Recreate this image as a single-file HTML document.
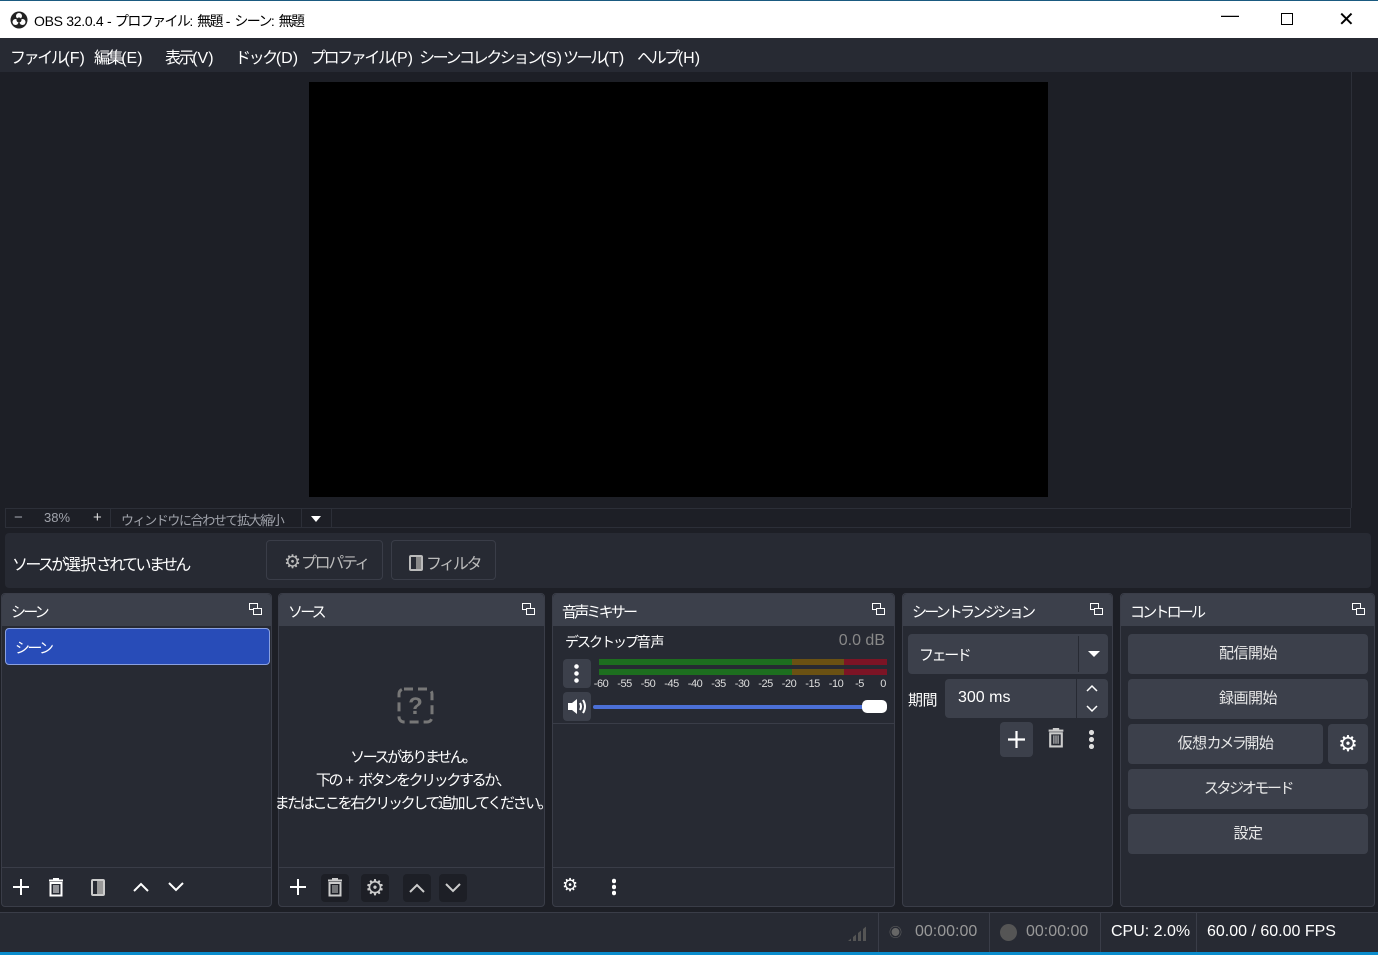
<!DOCTYPE html>
<html><head><meta charset="utf-8"><style>
*{box-sizing:border-box;margin:0;padding:0}
body{width:1378px;height:955px;overflow:hidden;background:#1d1f26;font-family:"Liberation Sans","Noto Sans CJK JP",sans-serif;color:#fff;position:relative;font-size:15px}
.a{position:absolute}
.j{letter-spacing:-2.6px}
i{font-style:normal;letter-spacing:0}
.title{left:0;top:0;width:1378px;height:38px;background:#fff;color:#000;border-top:1px solid #1a5a80}
.menu{left:0;top:38px;width:1378px;height:34px;background:#272a33;font-size:16px}
.menu span{position:absolute;top:6px;letter-spacing:-2.4px;white-space:nowrap}
.dock{background:#272a33;border:1px solid #3a3d48;border-radius:4px}
.hd{position:absolute;left:0;top:0;right:0;height:32px;background:#3c404b;font-size:15px;padding:7px 9px;border-radius:4px 4px 0 0;letter-spacing:-2.8px;white-space:nowrap}
.fl{position:absolute;right:9px;top:9px;width:13px;height:12px}
.btn{position:absolute;background:#3c404b;border-radius:4px;text-align:center;font-size:15px;color:#e8e8e8;letter-spacing:-2.4px}
.k{letter-spacing:-0.5px}
.tb{position:absolute;bottom:0;left:0;right:0;height:39px;border-top:1px solid #3a3d48}
.tk{position:absolute;top:52px;width:24px;text-align:center;font-size:11px;color:#ddd;letter-spacing:-0.5px}
</style></head><body>
<div class="a title">
<svg class="a" style="left:10px;top:10px" width="18" height="18" viewBox="0 0 18 18"><circle cx="9" cy="9" r="8.5" fill="#222"/><circle cx="9" cy="5" r="3" fill="#fff"/><circle cx="5.5" cy="11" r="3" fill="#fff"/><circle cx="12.5" cy="11" r="3" fill="#fff"/><circle cx="9" cy="9" r="2.5" fill="#222"/></svg>
<span class="a" style="left:34px;top:10px;font-size:14px;letter-spacing:-1.6px;white-space:nowrap"><i style="letter-spacing:-0.3px">OBS 32.0.4 - </i>プロファイル<i>: </i>無題<i> - </i>シーン<i>: </i>無題</span>
<span class="a" style="left:1221px;top:4px;font-size:18px">—</span>
<div class="a" style="left:1281px;top:12px;width:12px;height:12px;border:1px solid #000"></div>
<span class="a" style="left:1338px;top:6px;font-size:20px;font-weight:100">✕</span>
</div>
<div class="a menu">
<span style="left:10px">ファイル<i>(F)</i></span><span style="left:94px">編集<i>(E)</i></span><span style="left:165px">表示<i>(V)</i></span><span style="left:235px">ドック<i>(D)</i></span><span style="left:310px">プロファイル<i>(P)</i></span><span style="left:419px">シーンコレクション<i>(S)</i></span><span style="left:563px">ツール<i>(T)</i></span><span style="left:637px">ヘルプ<i>(H)</i></span>
</div>
<div class="a" style="left:309px;top:82px;width:739px;height:415px;background:#000"></div>
<div class="a" style="left:1351px;top:72px;width:19px;height:436px;border-left:1px solid #2c2f38"></div>
<div class="a" style="left:5px;top:508px;width:1346px;height:20px;border:1px solid #2c2f38;font-size:13px;color:#a0a3ab">
<span class="a" style="left:8px;top:0;font-size:15px;line-height:17px">−</span><span class="a" style="left:38px;top:1px">38%</span><span class="a" style="left:87px;top:0;color:#ddd;font-size:15px;line-height:17px">+</span>
<div class="a" style="left:104px;top:0;width:1px;height:18px;background:#2c2f38"></div>
<span class="a" style="left:115px;top:1px;letter-spacing:-1.4px;white-space:nowrap">ウィンドウに合わせて拡大縮小</span>
<div class="a" style="left:295px;top:0;width:1px;height:18px;background:#2c2f38"></div>
<div class="a" style="left:305px;top:7px;border:5px solid transparent;border-top:6px solid #fff;border-bottom:0"></div>
<div class="a" style="left:325px;top:0;width:1px;height:18px;background:#2c2f38"></div>
</div>
<div class="a" style="left:5px;top:533px;width:1366px;height:55px;background:#272a33;border-radius:4px">
<span class="a j" style="left:7px;top:18px;font-size:16px;white-space:nowrap">ソースが<span class="k">選択</span>されていません</span>
<div class="a" style="left:261px;top:7px;width:117px;height:40px;border:1px solid #3a3d48;border-radius:4px;color:#bbb;font-size:16px;padding:8px 0 0 17px;letter-spacing:-2.4px;white-space:nowrap"><span style="font-size:19px;letter-spacing:0">⚙</span>プロパティ</div>
<div class="a" style="left:386px;top:7px;width:105px;height:40px;border:1px solid #3a3d48;border-radius:4px;color:#bbb;font-size:16px;padding:9px 0 0 17px;letter-spacing:-2.4px;white-space:nowrap"><span style="display:inline-block;width:14px;height:16px;border:2px solid #bbb;border-radius:2px;vertical-align:-2px;background:linear-gradient(90deg,#272a33 50%,#888 50%);margin-right:3px"></span>フィルタ</div>
</div>
<!-- scenes -->
<div class="a dock" style="left:1px;top:593px;width:271px;height:314px">
<div class="hd">シーン<svg class="fl" viewBox="0 0 13 12"><rect x="0.5" y="0.5" width="8" height="6" fill="none" stroke="#fff"/><rect x="4.5" y="5.5" width="8" height="6" fill="#3c404b" stroke="#fff"/></svg></div>
<div class="a" style="left:3px;top:34px;width:265px;height:37px;background:#284cb8;border:1px solid #8aa0e0;border-radius:4px;padding:8px 9px;font-size:15px;letter-spacing:-2.6px">シーン</div>
<div class="tb">
<svg class="a" style="left:10px;top:10px" width="18" height="18"><path d="M9 1v16M1 9h16" stroke="#fff" stroke-width="2"/></svg>
<svg class="a" style="left:46px;top:10px" width="16" height="19" viewBox="0 0 16 19"><rect x="1" y="1.5" width="14" height="2" fill="#fff"/><rect x="5" y="0" width="6" height="2" fill="#fff"/><path d="M2.5 5h11v12.5h-11z" fill="none" stroke="#fff" stroke-width="2"/><path d="M6 7v8M8 7v8M10 7v8" stroke="#fff"/></svg>
<div class="a" style="left:89px;top:11px;width:14px;height:17px;border:2px solid #ccc;border-radius:2px;background:linear-gradient(90deg,#272a33 40%,#999 40%)"></div>
<svg class="a" style="left:130px;top:13px" width="18" height="12"><path d="M2 10l7-7 7 7" fill="none" stroke="#fff" stroke-width="2"/></svg>
<svg class="a" style="left:165px;top:13px" width="18" height="12"><path d="M2 2l7 7 7-7" fill="none" stroke="#fff" stroke-width="2"/></svg>
</div></div>
<!-- sources -->
<div class="a dock" style="left:278px;top:593px;width:267px;height:314px">
<div class="hd">ソース<svg class="fl" viewBox="0 0 13 12"><rect x="0.5" y="0.5" width="8" height="6" fill="none" stroke="#fff"/><rect x="4.5" y="5.5" width="8" height="6" fill="#3c404b" stroke="#fff"/></svg></div>
<svg class="a" style="left:118px;top:93px" width="37" height="37" viewBox="0 0 37 37"><rect x="2" y="2" width="33" height="33" rx="5" fill="none" stroke="#777" stroke-width="3" stroke-dasharray="9 5"/><text x="18.5" y="27" font-size="24" font-weight="bold" fill="#777" text-anchor="middle" font-family="Liberation Sans">?</text></svg>
<div class="a" style="left:-5px;top:152px;width:277px;text-align:center;font-size:15px;line-height:23px;letter-spacing:-2.4px;white-space:nowrap">ソースがありません。<br>下の<i> + </i>ボタンをクリックするか、<br>またはここを右クリックして追加してください。</div>
<div class="tb">
<svg class="a" style="left:10px;top:10px" width="18" height="18"><path d="M9 1v16M1 9h16" stroke="#fff" stroke-width="2"/></svg>
<div class="a" style="left:42px;top:6px;width:28px;height:28px;background:#1d1f26;border-radius:4px"></div>
<svg class="a" style="left:48px;top:10px" width="16" height="19" viewBox="0 0 16 19"><rect x="1" y="1.5" width="14" height="2" fill="#ccc"/><rect x="5" y="0" width="6" height="2" fill="#ccc"/><path d="M2.5 5h11v12.5h-11z" fill="none" stroke="#ccc" stroke-width="2"/><path d="M6 7v8M8 7v8M10 7v8" stroke="#ccc"/></svg>
<div class="a" style="left:82px;top:6px;width:28px;height:28px;background:#1d1f26;border-radius:4px;text-align:center;font-size:22px;color:#ccc;line-height:28px">⚙</div>
<div class="a" style="left:124px;top:6px;width:28px;height:28px;background:#1d1f26;border-radius:4px"></div>
<svg class="a" style="left:129px;top:14px" width="18" height="12"><path d="M2 10l7-7 7 7" fill="none" stroke="#ccc" stroke-width="2"/></svg>
<div class="a" style="left:160px;top:6px;width:28px;height:28px;background:#1d1f26;border-radius:4px"></div>
<svg class="a" style="left:165px;top:14px" width="18" height="12"><path d="M2 2l7 7 7-7" fill="none" stroke="#ccc" stroke-width="2"/></svg>
</div></div>
<!-- mixer -->
<div class="a dock" style="left:552px;top:593px;width:343px;height:314px">
<div class="hd">音声ミキサー<svg class="fl" viewBox="0 0 13 12"><rect x="0.5" y="0.5" width="8" height="6" fill="none" stroke="#fff"/><rect x="4.5" y="5.5" width="8" height="6" fill="#3c404b" stroke="#fff"/></svg></div>
<div class="a" style="left:0;top:32px;width:341px;height:98px;background:#272a33;border-bottom:1px solid #3a3d48">
<span class="a" style="left:12px;top:6px;font-size:14px;letter-spacing:-2px;white-space:nowrap">デスクトップ<span style="letter-spacing:-0.5px">音声</span></span>
<span class="a" style="right:9px;top:6px;font-size:16px;color:#888">0.0 dB</span>
<div class="a" style="left:10px;top:33px;width:28px;height:29px;background:#3c404b;border-radius:4px"><div style="position:absolute;left:11px;top:4px;width:5px;height:21px;background:radial-gradient(circle,#fff 2px,transparent 2.5px) 0 0/5px 7px"></div></div>
<div class="a" style="left:10px;top:66px;width:28px;height:29px;background:#3c404b;border-radius:4px">
<svg class="a" style="left:4px;top:6px" width="20" height="17" viewBox="0 0 20 17"><path d="M1 5h4l5-4v15l-5-4H1z" fill="#fff"/><path d="M13 5q2 3.5 0 7M16 2q4 6.5 0 13" fill="none" stroke="#fff" stroke-width="2"/></svg></div>
<div class="a" style="left:46px;top:33px;width:288px;height:6px;background:linear-gradient(90deg,#1d6e1f 0 67%,#6a5113 67% 85%,#7c1425 85%)"></div>
<div class="a" style="left:46px;top:43px;width:288px;height:6px;background:linear-gradient(90deg,#1d6e1f 0 67%,#6a5113 67% 85%,#7c1425 85%)"></div>
<span class="tk" style="left:36px">-60</span><span class="tk" style="left:59.5px">-55</span><span class="tk" style="left:83px">-50</span><span class="tk" style="left:106.5px">-45</span><span class="tk" style="left:130px">-40</span><span class="tk" style="left:153.5px">-35</span><span class="tk" style="left:177px">-30</span><span class="tk" style="left:200.5px">-25</span><span class="tk" style="left:224px">-20</span><span class="tk" style="left:247.5px">-15</span><span class="tk" style="left:271px">-10</span><span class="tk" style="left:294.5px">-5</span><span class="tk" style="left:318px">0</span>
<div class="a" style="left:40px;top:79px;width:275px;height:4px;background:#4b6fd6;border-radius:2px"></div>
<div class="a" style="left:309px;top:74px;width:25px;height:13px;background:#fff;border-radius:5px"></div>
</div>
<div class="tb">
<span class="a" style="left:9px;top:7px;font-size:18px">⚙</span>
<div class="a" style="left:59px;top:10px;width:4px;height:18px;background:radial-gradient(circle,#fff 2px,transparent 2.5px) 0 0/4px 6px"></div>
</div></div>
<!-- transitions -->
<div class="a dock" style="left:902px;top:593px;width:211px;height:314px">
<div class="hd">シーントランジション<svg class="fl" viewBox="0 0 13 12"><rect x="0.5" y="0.5" width="8" height="6" fill="none" stroke="#fff"/><rect x="4.5" y="5.5" width="8" height="6" fill="#3c404b" stroke="#fff"/></svg></div>
<div class="a" style="left:5px;top:40px;width:200px;height:40px;background:#3c404b;border-radius:4px;padding:10px 11px;font-size:15px;letter-spacing:-2.4px">フェード<div class="a" style="left:170px;top:2px;width:1px;height:36px;background:#272a33"></div><div class="a" style="left:180px;top:17px;border:6px solid transparent;border-top:6px solid #fff;border-bottom:0"></div></div>
<span class="a" style="left:5px;top:95px;font-size:15px;letter-spacing:-0.5px">期間</span>
<div class="a" style="left:42px;top:85px;width:163px;height:39px;background:#3c404b;border-radius:4px;padding:10px 13px;font-size:16px">300 ms<div class="a" style="left:131px;top:0;width:1px;height:39px;background:#272a33"></div>
<svg class="a" style="left:140px;top:5px" width="14" height="8"><path d="M2 7l5-5 5 5" fill="none" stroke="#fff" stroke-width="1.5"/></svg>
<svg class="a" style="left:140px;top:26px" width="14" height="8"><path d="M2 1l5 5 5-5" fill="none" stroke="#fff" stroke-width="1.5"/></svg></div>
<div class="a" style="left:97px;top:128px;width:33px;height:35px;background:#3c404b;border-radius:4px"><svg class="a" style="left:7px;top:8px" width="19" height="19"><path d="M9.5 1v17M1 9.5h17" stroke="#fff" stroke-width="2.2"/></svg></div>
<svg class="a" style="left:144px;top:134px" width="18" height="20" viewBox="0 0 16 19"><rect x="1" y="1.5" width="14" height="2" fill="#ccc"/><rect x="5" y="0" width="6" height="2" fill="#ccc"/><path d="M2.5 5h11v12.5h-11z" fill="none" stroke="#ccc" stroke-width="2"/><path d="M6 7v8M8 7v8M10 7v8" stroke="#ccc"/></svg>
<div class="a" style="left:186px;top:135px;width:5px;height:20px;background:radial-gradient(circle,#ddd 2.3px,transparent 2.8px) 0 0/5px 7px"></div>
</div>
<!-- controls -->
<div class="a dock" style="left:1120px;top:593px;width:255px;height:314px">
<div class="hd">コントロール<svg class="fl" viewBox="0 0 13 12"><rect x="0.5" y="0.5" width="8" height="6" fill="none" stroke="#fff"/><rect x="4.5" y="5.5" width="8" height="6" fill="#3c404b" stroke="#fff"/></svg></div>
<div class="btn k" style="left:7px;top:40px;width:240px;height:40px;line-height:40px">配信開始</div>
<div class="btn k" style="left:7px;top:85px;width:240px;height:40px;line-height:40px">録画開始</div>
<div class="btn" style="left:7px;top:130px;width:195px;height:40px;line-height:40px"><span class="k">仮想</span>カメラ<span class="k">開始</span></div>
<div class="btn" style="left:207px;top:130px;width:40px;height:40px;line-height:40px;font-size:22px;color:#fff;letter-spacing:0">⚙</div>
<div class="btn" style="left:7px;top:175px;width:240px;height:40px;line-height:40px">スタジオモード</div>
<div class="btn k" style="left:7px;top:220px;width:240px;height:40px;line-height:40px">設定</div>
</div>
<!-- status -->
<div class="a" style="left:0;top:912px;width:1378px;height:40px;background:#272a33;border-top:1px solid #3a3d48;font-size:16px;color:#999">
<div class="a" style="left:848px;top:12px;width:20px;height:16px;background:linear-gradient(90deg,#555 3px,transparent 3px) 0 0/5px 100%;clip-path:polygon(0 100%,100% 0,100% 100%)"></div>
<div class="a" style="left:878px;top:0;width:1px;height:40px;background:#3a3d48"></div>
<span class="a" style="left:889px;top:9px;font-size:13px;color:#666">◉</span><span class="a" style="left:915px;top:10px">00:00:00</span>
<div class="a" style="left:989px;top:0;width:1px;height:40px;background:#3a3d48"></div>
<div class="a" style="left:1000px;top:11px;width:17px;height:17px;border-radius:50%;background:#555"></div><span class="a" style="left:1026px;top:10px">00:00:00</span>
<div class="a" style="left:1100px;top:0;width:1px;height:40px;background:#3a3d48"></div>
<span class="a" style="left:1111px;top:10px;color:#fff">CPU: 2.0%</span>
<div class="a" style="left:1196px;top:0;width:1px;height:40px;background:#3a3d48"></div>
<span class="a" style="left:1207px;top:10px;color:#fff">60.00 / 60.00 FPS</span>
</div>
<div class="a" style="left:0;top:952px;width:1378px;height:3px;background:#0a8ccc"></div>
</body></html>
